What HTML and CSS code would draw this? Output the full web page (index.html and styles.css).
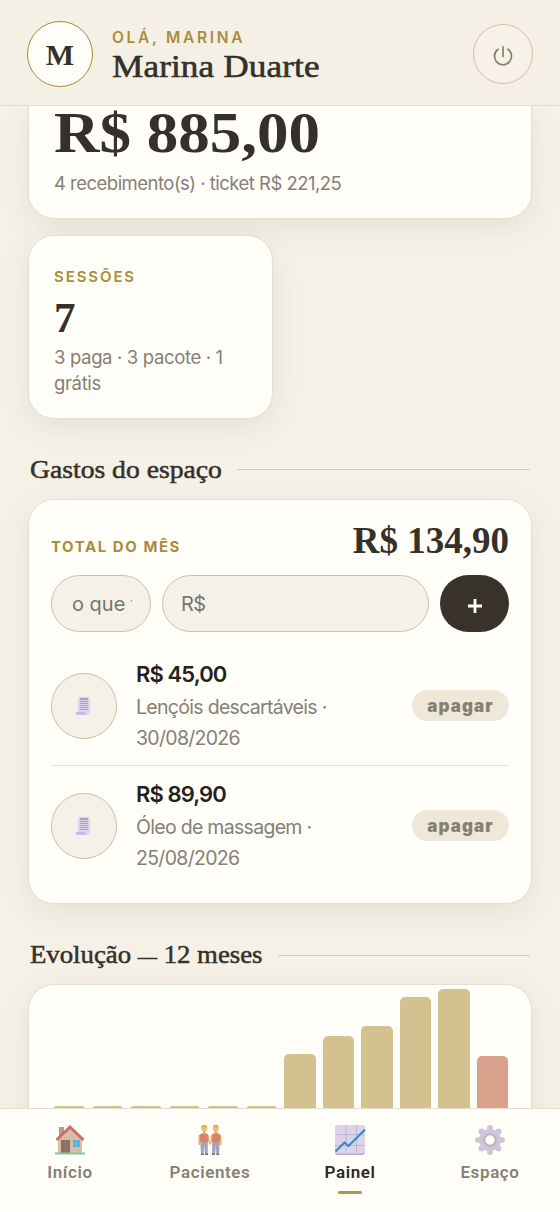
FILE: index.html
```html
<!DOCTYPE html>
<html lang="pt-BR">
<head>
<meta charset="utf-8">
<meta name="viewport" content="width=device-width">
<title>Painel</title>
<link rel="stylesheet" href="styles.css">
</head>
<body>
<div class="app">
  <header class="topbar">
    <div class="avatar">M</div>
    <div class="who">
      <div class="hello">OLÁ, MARINA</div>
      <h1 class="name">Marina Duarte</h1>
    </div>
    <button class="power" aria-label="Sair">
      <svg width="22" height="22" viewBox="0 0 22 22" fill="none" stroke="#878071" stroke-width="1.7" stroke-linecap="round"><path d="M11 1.800v9.600M6.100 4.300a8.500 8.500 0 1 0 9.800 0"/></svg>
    </button>
  </header>
  <main class="content">
    <section class="card income">
      <div class="amount">R$ 885,00</div>
      <div class="note income-note">4 recebimento(s) · ticket R$ 221,25</div>
    </section>
    <section class="card sessions">
      <div class="label sessions-label">SESSÕES</div>
      <div class="count">7</div>
      <div class="note">3 paga · 3 pacote · 1<br>grátis</div>
    </section>
    <h2 class="heading"><span class="h-gastos">Gastos do espaço</span></h2>
    <section class="card expenses">
      <div class="total">
        <span class="label total-label">TOTAL DO MÊS</span>
        <span class="total-value">R$ 134,90</span>
      </div>
      <div class="form">
        <div class="field what"><span>o que foi</span></div>
        <div class="field">R$</div>
        <button class="add" aria-label="Adicionar"><svg width="16" height="16" viewBox="0 0 16 16" stroke="#fffef9" stroke-width="2.8"><path d="M8 1v14M1 8h14"/></svg></button>
      </div>
      <div class="row">
        <div class="bubble"><svg width="18" height="20" viewBox="0 0 18 20"><path d="M3 1h12v16H3z" fill="#dcd4ec"/><path d="M1 16h10v3H2q-2-1-1-3z" fill="#cabce9"/><path d="M11 17h4v1q-2 2-4 1z" fill="#e2daf0"/><path d="M5 3h8" stroke="#8e889d" stroke-width="1.3"/><path d="M5 5.5h8M5 7.5h8M5 9.5h8M5 11.5h8M5 13.5h8" stroke="#aaa4b9"/></svg></div>
        <div class="info"><div class="price">R$ 45,00</div><div class="desc">Lençóis descartáveis ·<br>30/08/2026</div></div>
        <button class="remove">apagar</button>
      </div>
      <div class="row">
        <div class="bubble"><svg width="18" height="20" viewBox="0 0 18 20"><path d="M3 1h12v16H3z" fill="#dcd4ec"/><path d="M1 16h10v3H2q-2-1-1-3z" fill="#cabce9"/><path d="M11 17h4v1q-2 2-4 1z" fill="#e2daf0"/><path d="M5 3h8" stroke="#8e889d" stroke-width="1.3"/><path d="M5 5.5h8M5 7.5h8M5 9.5h8M5 11.5h8M5 13.5h8" stroke="#aaa4b9"/></svg></div>
        <div class="info"><div class="price">R$ 89,90</div><div class="desc">Óleo de massagem ·<br>25/08/2026</div></div>
        <button class="remove">apagar</button>
      </div>
    </section>
    <h2 class="heading second"><span class="h-evo">Evolução <small>—</small> 12 meses</span></h2>
    <section class="card chart">
      <i style="height:4px"></i><i style="height:4px"></i><i style="height:4px"></i><i style="height:4px"></i><i style="height:4px"></i><i style="height:4px"></i>
      <i style="height:56px"></i><i style="height:74px"></i><i style="height:84.5px"></i><i style="height:113px"></i><i style="height:121.5px"></i><i class="now" style="height:54.5px"></i>
    </section>
  </main>
  <nav class="tabs">
    <a class="tab"><svg width="32" height="32" viewBox="0 0 32 32"><path d="M5 3h5v9H5z" fill="#b59a8d"/><path d="M4 14 16 4l12 10v15H4z" fill="#d9bda6"/><path d="M1.500 15 16 1l14.500 14-2 2L16 5 3.500 17z" fill="#cf6c5f"/><path d="M7 16h9v13H7z" fill="#8b7067"/><path d="M11.500 17v11" stroke="#9b7b6d"/><path d="M19 16h7v7h-7z" fill="#5caee2"/><path d="M22.500 16v7M19 19.500h7" stroke="#70b9e6"/><path d="M1 28.500h30v2H1z" fill="#76cb9a"/></svg><span>Início</span></a>
    <a class="tab"><svg width="32" height="32" viewBox="0 0 32 32"><g id="person"><path d="M6.200 17h7.600v13h-3l-.6-9-.6 9H7z" fill="#a8a1b8"/><path d="M5.700 11q-.8 5-.2 10" stroke="#e9b35f" stroke-width="1.600" fill="none"/><path d="M5.500 11.500q1-2.500 4.600-2.500t4.400 2.500V18H6.300z" fill="#dd8069"/><path d="M9 6h2.500v4H9z" fill="#e3a853"/><circle cx="10.200" cy="4.500" r="3" fill="#ecc06a"/><path d="M7.200 3.500q.5-2.800 3-2.800t3 2.800l-3-1z" fill="#d6a35a"/><path d="M6.800 29.500h3V31h-3zM11 29.500h3V31h-3z" fill="#766c86"/></g><use href="#person" transform="matrix(-1 0 0 1 32 0)"/><path d="M14.500 12q.2 6 1.500 8 1.300-2 1.500-8" stroke="#e9b35f" stroke-width="1.400" fill="none"/></svg><span>Pacientes</span></a>
    <a class="tab active"><svg width="32" height="32" viewBox="0 0 32 32"><rect x="1" y="1" width="30" height="30" rx="3" fill="#bba8d0"/><rect x="1" y="1" width="30" height="28.500" rx="3" fill="#dcd4e7"/><path d="M1 10.500h30M1 21.500h30M12 1v28M22.500 1v28" stroke="#beb5ca" stroke-width="1"/><path d="M1.500 27.500 10.500 18.500l4 3.500L31 5.500" fill="none" stroke="#328fd5" stroke-width="2.300"/></svg><span>Painel</span></a>
    <a class="tab"><svg width="32" height="32" viewBox="0 0 32 32"><g fill="#cdc6d7"><circle cx="16" cy="4" r="3"/><circle cx="24.500" cy="7.500" r="3"/><circle cx="28" cy="16" r="3"/><circle cx="24.500" cy="24.500" r="3"/><circle cx="16" cy="28" r="3"/><circle cx="7.500" cy="24.500" r="3"/><circle cx="4" cy="16" r="3"/><circle cx="7.500" cy="7.500" r="3"/></g><circle cx="16" cy="16" r="8.500" fill="none" stroke="#cdc6d7" stroke-width="5"/><circle cx="16" cy="16" r="5.700" fill="#fffef9" stroke="#b9b4c0" stroke-width="2"/></svg><span>Espaço</span></a>
  </nav>
</div>
</body>
</html>
```
FILE: styles.css
```css
* { box-sizing: border-box; }
body { margin: 0; background: #f5f1e7; font-family: Inter, "Liberation Sans", sans-serif; color: #353029; }
button { font: inherit; border: 0; padding: 0; }
.app { height: 1212px; display: flex; flex-direction: column; overflow: hidden; }
.topbar { height: 106px; flex: none; display: flex; align-items: center; padding: 2px 27px 0; background: #f4f0e6; border-bottom: 1px solid #e2dccd; }
.avatar { width: 66px; height: 66px; border: 1px solid #ac8936; border-radius: 50%; background: #fffef9; display: grid; place-items: center; font: bold 30px/1 "Liberation Serif", serif; padding-top: 3px; }
.who { margin-left: 19px; flex: 1; padding-top: 5px; }
.hello { color: #ad8b3e; font-size: 15.500px; font-weight: 600; line-height: 20px; letter-spacing: 2.700px; white-space: nowrap; }
.name { margin: 0; width: max-content; font: 500 32px/36px "Liberation Serif", serif; letter-spacing: .1px; transform: scaleX(1.1); transform-origin: left; -webkit-text-stroke: .6px #353029; white-space: nowrap; }
.power { width: 60px; height: 60px; border: 1px solid #cbc1a9; border-radius: 50%; background: #f6f2e8; display: grid; place-items: center; padding-top: 4px; }
.content { flex: 1; min-height: 0; padding: 0 28px; background: #f5f1e7; }
.card { background: #fffef9; border: 1px solid #e5dfd1; border-radius: 26px; box-shadow: 0 8px 30px rgba(80, 70, 35, .09); }
.income { height: 113px; border-top: 0; border-radius: 0 0 26px 26px; padding: 0 25px; }
.amount { width: max-content; font: bold 57px/54px "Liberation Serif", serif; transform: scaleX(1.105); transform-origin: left; white-space: nowrap; }
.note { font-size: 18.500px; line-height: 25.500px; letter-spacing: -.35px; color: #858076; white-space: nowrap; }
.income-note { padding-top: 11px; letter-spacing: -.52px; }
.sessions { width: 245px; height: 184px; margin-top: 16px; padding: 29px 25px 0; }
.label { color: #ad8b3e; font-size: 15px; font-weight: 700; line-height: 24px; white-space: nowrap; }
.sessions-label { letter-spacing: 1.900px; font-weight: 600; }
.count { font: bold 43px/52px "Liberation Serif", serif; margin-top: 3px; margin-bottom: 1px; }
.heading { height: 33px; margin: 34px 2px 13px; display: flex; align-items: center; gap: 16px; font: 500 25px/33px "Liberation Serif", serif; -webkit-text-stroke: .5px #353029; white-space: nowrap; }
.heading::after { content: ""; flex: 1; height: 1px; background: #d5ccb7; }
.heading span { transform-origin: left; }
.heading.second { margin-top: 35px; margin-bottom: 12px; }
.h-gastos { width: 191px; transform: scaleX(1.105); }
.h-evo { width: 232px; transform: scaleX(1.07); }
.h-evo small { font-size: 18px; }
.expenses { height: 405px; padding: 23px 22px 0; }
.total { height: 52px; display: flex; justify-content: space-between; align-items: flex-start; }
.total-label { padding-top: 12px; letter-spacing: 1.550px; }
.total-value { font: bold 37px/36px "Liberation Serif", serif; }
.form { display: grid; grid-template-columns: 100px 1fr 69px; gap: 11px; height: 57px; }
.field { border: 1px solid #cbc1a9; border-radius: 29px; background: #f5f1e8; color: #77746e; padding: 0 18px; font-size: 20px; letter-spacing: -.6px; line-height: 56px; overflow: hidden; white-space: nowrap; }
.what { padding-left: 20px; letter-spacing: 0; }
.what span { display: block; width: 60px; overflow: hidden; }
.add { border-radius: 29px; background: #38322b; display: grid; place-items: center; padding-top: 5px; }
.row { height: 119px; display: flex; align-items: center; }
.form + .row { height: 120px; margin-top: 14px; border-bottom: 1px solid #e5dfd1; }
.bubble { width: 66px; height: 66px; border: 1px solid #cbc1a9; border-radius: 50%; background: #f5f1e8; display: grid; place-items: center; }
.info { flex: 1; margin-left: 19px; }
.price { color: #24211d; font-size: 22px; font-weight: 600; line-height: 33px; letter-spacing: -.9px; }
.desc { color: #858076; font-size: 19.500px; line-height: 31px; letter-spacing: -.7px; white-space: nowrap; padding-top: 1px; margin-bottom: -1px; }
.remove { width: 97px; height: 31px; border-radius: 16px; background: #eee7da; color: #878071; font-size: 17px; font-weight: 900; letter-spacing: 1.100px; }
.chart { height: 180px; padding: 0 23px 53px 24px; display: grid; grid-template-columns: repeat(12, 1fr); gap: 7px; align-items: end; }
.chart i { background: #d3c18f; border-radius: 5px 5px 0 0; }
.chart .now { background: #d9a18b; }
.tabs { height: 104px; flex: none; display: grid; grid-template-columns: repeat(4, 1fr); background: #fffef9; border-top: 1px solid #e2dccd; }
.topbar, .tabs { position: relative; z-index: 1; }
.tab { display: flex; flex-direction: column; align-items: center; padding-top: 15px; color: #878071; font: 600 17px/24px Roboto, sans-serif; letter-spacing: .6px; }
.tab span { margin-top: 4px; }
.tab.active { color: #2b2721; }
.active::after { content: ""; width: 24px; height: 3px; border-radius: 2px; background: #b49345; margin-top: 7px; }
```
